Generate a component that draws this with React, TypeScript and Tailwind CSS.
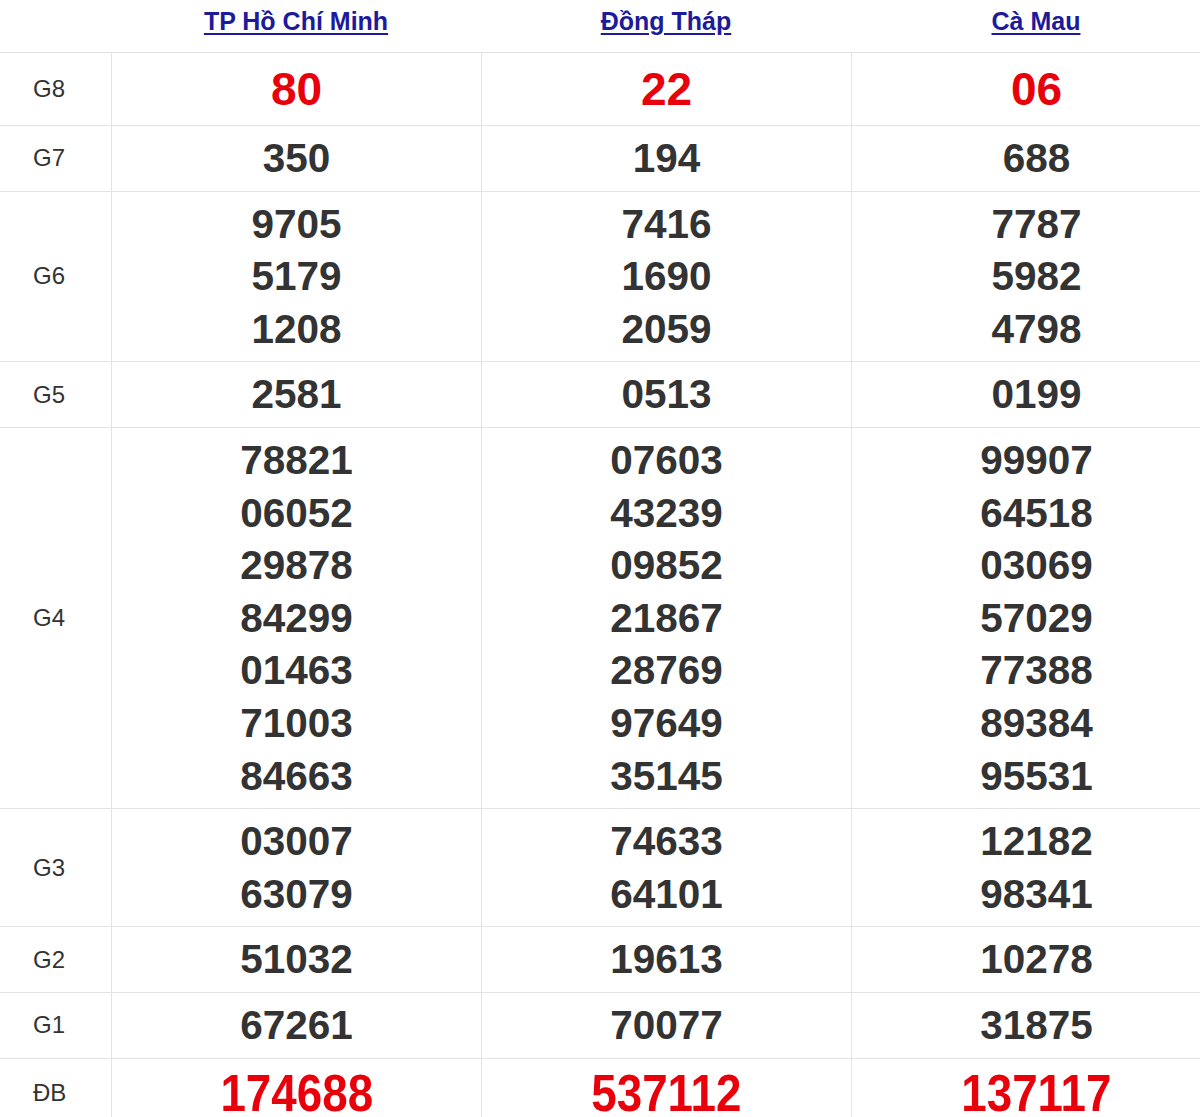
import React from 'react';

type Row = { label: string; values: string[][]; red?: boolean; special?: boolean };

const provinces = ['TP Hồ Chí Minh', 'Đồng Tháp', 'Cà Mau'];

const rows: Row[] = [
  { label: 'G8', values: [['80'], ['22'], ['06']], red: true },
  { label: 'G7', values: [['350'], ['194'], ['688']] },
  { label: 'G6', values: [['9705', '5179', '1208'], ['7416', '1690', '2059'], ['7787', '5982', '4798']] },
  { label: 'G5', values: [['2581'], ['0513'], ['0199']] },
  {
    label: 'G4',
    values: [
      ['78821', '06052', '29878', '84299', '01463', '71003', '84663'],
      ['07603', '43239', '09852', '21867', '28769', '97649', '35145'],
      ['99907', '64518', '03069', '57029', '77388', '89384', '95531'],
    ],
  },
  { label: 'G3', values: [['03007', '63079'], ['74633', '64101'], ['12182', '98341']] },
  { label: 'G2', values: [['51032'], ['19613'], ['10278']] },
  { label: 'G1', values: [['67261'], ['70077'], ['31875']] },
  { label: 'ĐB', values: [['174688'], ['537112'], ['137117']], red: true, special: true },
];

const App: React.FC = () => {
  return (
    <div className="w-[1200px] h-[1117px] overflow-hidden bg-white font-['Liberation_Sans',Arial,sans-serif]">
      <div className="w-[1221px]">
        {/* Header */}
        <div className="flex h-[52px]">
          <div className="w-[111px]" />
          {provinces.map((p) => (
            <div key={p} className="w-[370px] pt-[7px] text-center">
              <a href="#" className="text-[25px] leading-[29px] font-bold text-[#1d1a9c] underline underline-offset-[3px]">
                {p}
              </a>
            </div>
          ))}
        </div>

        {/* Rows */}
        {rows.map((row) => (
          <div key={row.label} className="flex border-t border-[#e3e3e3]">
            <div className="w-[111px] flex items-center pl-[33px] text-[24px] text-[#333]">{row.label}</div>
            {row.values.map((vals, i) => (
              <div key={i} className="w-[370px] border-l border-[#e3e3e3] py-[6px] text-center font-bold">
                {vals.map((v) =>
                  row.special ? (
                    <div key={v} className="text-[52px] leading-[57px] text-[#e8000b]">
                      <span className="inline-block scale-x-[0.88]">{v}</span>
                    </div>
                  ) : row.red ? (
                    <div key={v} className="text-[46px] leading-[60px] text-[#e8000b]">
                      {v}
                    </div>
                  ) : (
                    <div key={v} className="text-[40.5px] leading-[52.6px] text-[#333]">
                      {v}
                    </div>
                  )
                )}
              </div>
            ))}
          </div>
        ))}
      </div>
    </div>
  );
};

export default App;
